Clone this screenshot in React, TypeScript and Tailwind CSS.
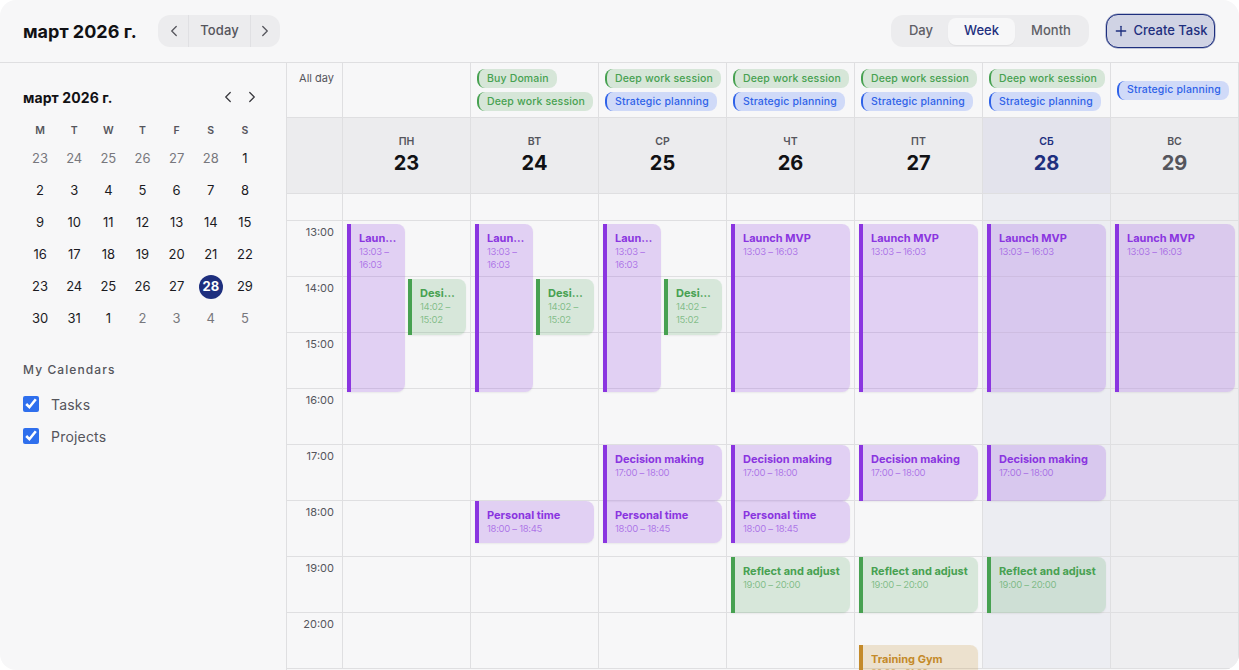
import { ChevronLeft, ChevronRight, Plus } from 'lucide-react';

type Kind = 'purple' | 'green' | 'orange';
type ChipKind = 'green' | 'blue';

interface CalEvent {
    title: string;
    time: string;
    kind: Kind;
    top: number;
    height: number;
    left: number;
    width: number;
}

const eventClass: Record<Kind, string> = {
    purple: 'bg-[#8a35e0]/[.2] border-[#8a35e0]',
    green: 'bg-[#47a151]/[.18] border-[#47a151]',
    orange: 'bg-[#c48a2a]/[.2] border-[#c48a2a]',
};
const titleClass: Record<Kind, string> = {
    purple: 'text-[#8a35e0]',
    green: 'text-[#47a151]',
    orange: 'text-[#c48a2a]',
};
const timeClass: Record<Kind, string> = {
    purple: 'text-[#8a35e0]/60',
    green: 'text-[#47a151]/60',
    orange: 'text-[#c48a2a]/60',
};
const chipClass: Record<ChipKind, string> = {
    green: 'bg-[#d6e6d8] border-[#47a151] text-[#47a151]',
    blue: 'bg-[#d0daf8] border-[#2f62e8] text-[#2f62e8]',
};

const launch = (narrow: boolean, width = 119): CalEvent => ({
    title: 'Launch MVP', time: '13:03 – 16:03', kind: 'purple', top: 3, height: 168, left: 4, width: narrow ? 58 : width,
});
const design: CalEvent = { title: 'Design review', time: '14:02 – 15:02', kind: 'green', top: 58, height: 56, left: 65, width: 58 };
const decision: CalEvent = { title: 'Decision making', time: '17:00 – 18:00', kind: 'purple', top: 224, height: 56, left: 4, width: 119 };
const personal: CalEvent = { title: 'Personal time', time: '18:00 – 18:45', kind: 'purple', top: 280, height: 42, left: 4, width: 119 };
const reflect: CalEvent = { title: 'Reflect and adjust', time: '19:00 – 20:00', kind: 'green', top: 336, height: 56, left: 4, width: 119 };
const gym: CalEvent = { title: 'Training Gym', time: '20:36 – 21:36', kind: 'orange', top: 424, height: 56, left: 4, width: 119 };

const deep = { label: 'Deep work session', kind: 'green' as ChipKind };
const strategic = { label: 'Strategic planning', kind: 'blue' as ChipKind };
const buy = { label: 'Buy Domain', kind: 'green' as ChipKind };

const days = [
    { name: 'ПН', num: 23, chips: [], events: [launch(true), design] },
    { name: 'ВТ', num: 24, chips: [buy, deep], events: [launch(true), design, personal] },
    { name: 'СР', num: 25, chips: [deep, strategic], events: [launch(true), design, decision, personal] },
    { name: 'ЧТ', num: 26, chips: [deep, strategic], events: [launch(false), decision, personal, reflect] },
    { name: 'ПТ', num: 27, chips: [deep, strategic], events: [launch(false), decision, reflect, gym] },
    { name: 'СБ', num: 28, chips: [deep, strategic], events: [launch(false), decision, reflect], today: true },
    { name: 'ВС', num: 29, chips: [strategic], events: [launch(false, 120)], weekend: true },
];

const hours = ['13:00', '14:00', '15:00', '16:00', '17:00', '18:00', '19:00', '20:00'];

const miniDays = [
    23, 24, 25, 26, 27, 28, 1,
    2, 3, 4, 5, 6, 7, 8,
    9, 10, 11, 12, 13, 14, 15,
    16, 17, 18, 19, 20, 21, 22,
    23, 24, 25, 26, 27, 28, 29,
    30, 31, 1, 2, 3, 4, 5,
];

const EventCard = ({ ev }: { ev: CalEvent }) => (
    <div
        className={`absolute overflow-hidden rounded-r-lg border-l-4 pl-2 pr-1.5 pt-2 shadow-[0_1px_2px_rgba(0,0,0,0.06)] ${eventClass[ev.kind]}`}
        style={{ top: ev.top, height: ev.height, left: ev.left, width: ev.width }}
    >
        <div className={`truncate text-[11px] font-bold leading-[13px] ${titleClass[ev.kind]}`}>{ev.title}</div>
        <div className={`text-[9.5px] leading-[13px] tracking-[-0.3px] ${timeClass[ev.kind]}`}>{ev.time}</div>
    </div>
);

const App = () => {
    return (
        <div className="h-[670px] w-[1239px] overflow-hidden bg-white font-['Inter',sans-serif]">
            <div className="flex h-full flex-col overflow-hidden rounded-2xl bg-[#f7f7f8] text-[#111114]">
                <header className="flex h-[63px] shrink-0 items-center border-b border-[#dfdfe1] pl-[23px] pr-6">
                    <h1 className="mt-px w-[135px] text-[18px] font-bold">март 2026 г.</h1>
                    <div className="flex h-8 w-[122px] items-center rounded-xl bg-[#ececee] text-[#55555c]">
                        <button className="flex h-full w-[31px] items-center justify-center border-r border-[#e0e0e3] pl-px"><ChevronLeft size={18} strokeWidth={1.75} /></button>
                        <button className="flex h-full w-[61px] items-center justify-center text-[13px] font-medium tracking-[0.1px]">Today</button>
                        <button className="flex h-full w-[30px] items-center justify-center border-l border-[#e0e0e3] pr-0.5"><ChevronRight size={18} strokeWidth={1.75} /></button>
                    </div>
                    <div className="ml-auto flex h-8 w-[198px] items-center rounded-xl bg-[#ececee] pl-[3px] text-[13px] font-medium text-[#5f5f66]">
                        <span className="w-[54px] text-center">Day</span>
                        <span className="flex h-[27px] w-[67px] items-center justify-center rounded-lg bg-[#f7f7f8] text-[#1e2f7e] shadow-[0_1px_1px_rgba(0,0,0,0.05)]">Week</span>
                        <span className="w-[72px] text-center">Month</span>
                    </div>
                    <button className="ml-[17px] flex h-[34px] w-[109px] items-center justify-center gap-1 rounded-xl border border-[#1e2f7e] bg-[#d0d3e4] text-[13px] font-medium text-[#1e2f7e] shadow-[0_0_0_0.5px_rgba(30,47,126,0.5)]">
                        <Plus size={16} strokeWidth={2} />
                        Create Task
                    </button>
                </header>

                <div className="flex min-h-0 flex-1">
                    <aside className="w-[287px] shrink-0 border-r border-[#dfdfe1] pl-[23px] pr-6">
                        <div className="mt-6 flex h-5 items-center justify-between pr-px">
                            <h2 className="text-[14px] font-bold tracking-[0.1px]">март 2026 г.</h2>
                            <div className="flex gap-1.5 text-[#3a3a40]">
                                <ChevronLeft size={18} strokeWidth={1.75} />
                                <ChevronRight size={18} strokeWidth={1.75} />
                            </div>
                        </div>
                        <div className="mt-3 grid w-[239px] grid-cols-7">
                            {['M', 'T', 'W', 'T', 'F', 'S', 'S'].map((d, i) => (
                                <div key={i} className="flex h-[24px] items-center justify-center text-[10.5px] font-semibold text-[#55555c]">{d}</div>
                            ))}
                            {miniDays.map((d, i) => {
                                const muted = i < 6 || i > 37;
                                const selected = i === 33;
                                return (
                                    <div key={i} className="flex h-8 items-center justify-center text-[13px]">
                                        {selected ? (
                                            <span className="flex h-6 w-6 items-center justify-center rounded-full bg-[#1e2f7e] font-bold text-white">{d}</span>
                                        ) : (
                                            <span className={muted ? 'text-[#77777d]' : 'text-[#1b1b1f]'}>{d}</span>
                                        )}
                                    </div>
                                );
                            })}
                        </div>
                        <h3 className="mt-[27px] text-[12px] font-medium leading-4 tracking-[1.1px] text-[#55555c]">My Calendars</h3>
                        <label className="mt-[18px] flex h-4 items-center gap-3 text-[14px] tracking-[0.2px] text-[#55555c]">
                            <input type="checkbox" defaultChecked className="h-4 w-4 accent-[#2f6fed]" />
                            Tasks
                        </label>
                        <label className="mt-4 flex h-4 items-center gap-3 text-[14px] tracking-[0.2px] text-[#55555c]">
                            <input type="checkbox" defaultChecked className="h-4 w-4 accent-[#2f6fed]" />
                            Projects
                        </label>
                    </aside>

                    <main className="min-w-0 flex-1">
                        <div className="grid grid-cols-[56px_repeat(7,128px)]">
                            <div className="flex h-[55px] justify-end border-b border-r border-[#dfdfe1] pr-2 pt-[9px] text-[11px] leading-[13px] text-[#55555c]">All day</div>
                            {days.map((day) => (
                                <div key={day.num} className="flex h-[55px] flex-col justify-center gap-1 border-b border-r border-[#dfdfe1] pl-1.5">
                                    {day.chips.map((chip) => (
                                        <div key={chip.label} className={`flex h-[19px] w-fit items-center rounded-lg border-l-2 px-2 text-[10.5px] font-medium tracking-[0.15px] ${chipClass[chip.kind]}`}>{chip.label}</div>
                                    ))}
                                </div>
                            ))}

                            <div className="h-[76px] border-b border-r border-[#dfdfe1] bg-[#ececee]" />
                            {days.map((day) => (
                                <div
                                    key={day.num}
                                    className={`flex h-[76px] flex-col items-center justify-center border-b border-r border-[#dfdfe1] pt-[2px] ${day.today ? 'bg-[#e3e3ec]' : 'bg-[#ececee]'}`}
                                >
                                    <span className={`text-[10.5px] font-semibold leading-[13px] ${day.today ? 'text-[#1e2f7e]' : 'text-[#55555c]'}`}>{day.name}</span>
                                    <span className={`text-[20px] font-bold leading-[30px] ${day.today ? 'text-[#1e2f7e]' : day.weekend ? 'text-[#55555c]' : 'text-[#111114]'}`}>{day.num}</span>
                                </div>
                            ))}

                            <div className="border-r border-[#dfdfe1]">
                                <div className="h-[27px] border-b border-[#dfdfe1]" />
                                {hours.map((h) => (
                                    <div key={h} className="flex h-14 justify-end border-b border-[#dfdfe1] pr-2 pt-[5px] text-[11px] leading-[13px] text-[#55555c]">{h}</div>
                                ))}
                            </div>
                            {days.map((day) => (
                                <div key={day.num} className={`border-r border-[#dfdfe1] ${day.today ? 'bg-[#ecedf2]' : day.weekend ? 'bg-[#eeeef0]' : ''}`}>
                                    <div className="h-[27px] border-b border-[#dfdfe1]" />
                                    <div className="relative">
                                        {hours.map((h) => (
                                            <div key={h} className="h-14 border-b border-[#dfdfe1]" />
                                        ))}
                                        {day.events.map((ev) => (
                                            <EventCard key={ev.title} ev={ev} />
                                        ))}
                                    </div>
                                </div>
                            ))}
                        </div>
                    </main>
                </div>
            </div>
        </div>
    );
};

export default App;
